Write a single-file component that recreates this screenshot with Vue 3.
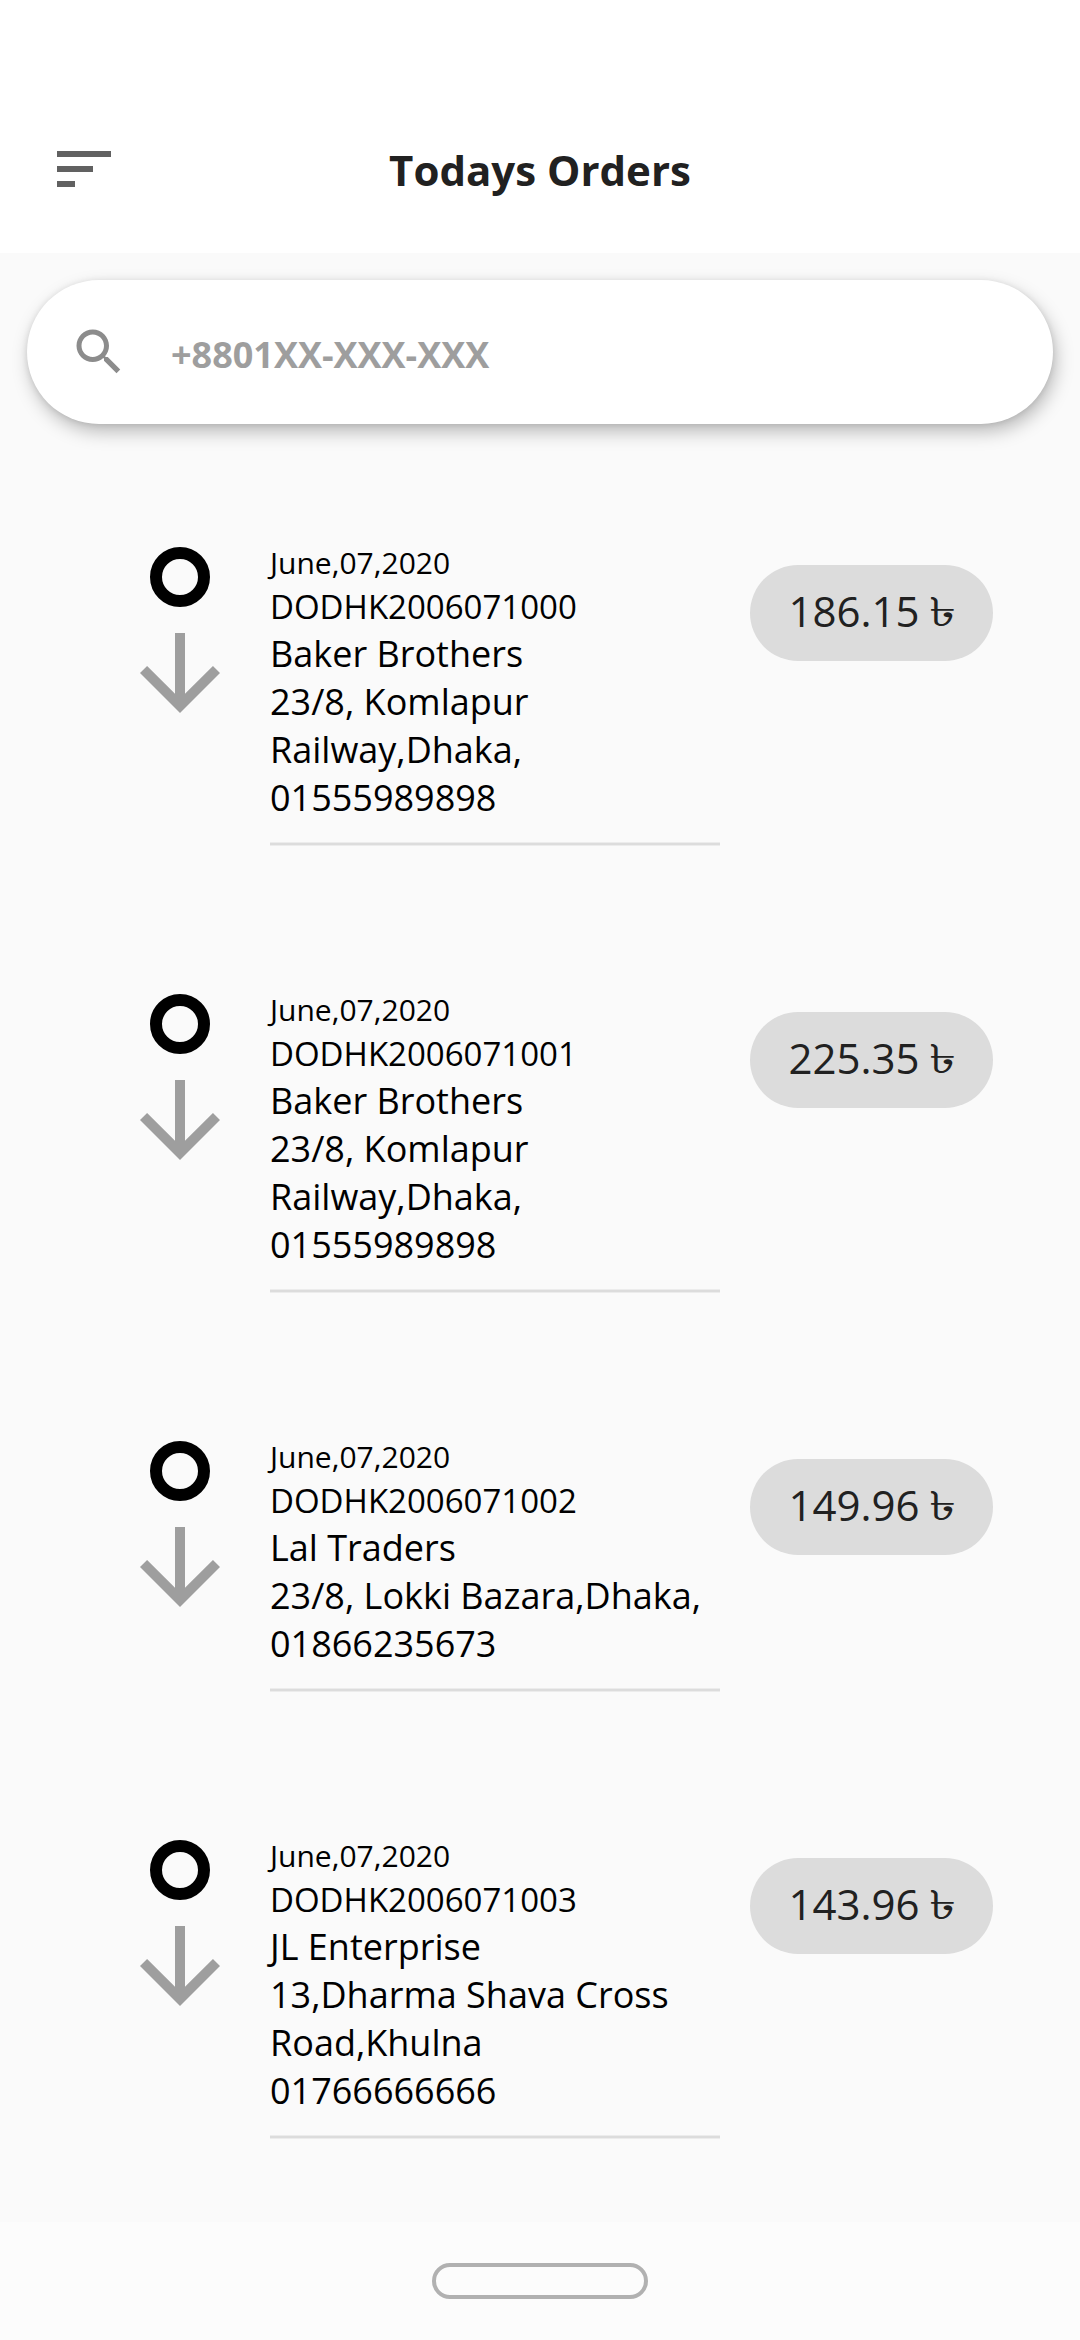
<script setup>
const orders = [
  { code: 'DODHK2006071000', name: 'Baker Brothers', address: '23/8, Komlapur Railway,Dhaka,', phone: '01555989898', price: '186.15' },
  { code: 'DODHK2006071001', name: 'Baker Brothers', address: '23/8, Komlapur Railway,Dhaka,', phone: '01555989898', price: '225.35' },
  { code: 'DODHK2006071002', name: 'Lal Traders', address: '23/8, Lokki Bazara,Dhaka,', phone: '01866235673', price: '149.96' },
  { code: 'DODHK2006071003', name: 'JL Enterprise', address: '13,Dharma Shava Cross Road,Khulna', phone: '01766666666', price: '143.96' }
]
</script>

<template>
  <div class="screen">
    <header class="bar">
      <svg class="menu" width="54" height="36" viewBox="0 0 54 36" fill="#616161">
        <path d="M0 0h54v6H0zM0 15h36v6H0zM0 30h18v6H0z" />
      </svg>
      <h1 class="title">Todays Orders</h1>
    </header>

    <main class="content">
      <label class="search">
        <svg width="60" height="60" viewBox="0 0 24 24" fill="#8c8c8c">
          <path d="M15.5 14h-.79l-.28-.27C15.41 12.59 16 11.11 16 9.5 16 5.91 13.09 3 9.5 3S3 5.91 3 9.5 5.91 16 9.5 16c1.61 0 3.09-.59 4.23-1.57l.27.28v.79l5 4.99L20.49 19l-4.99-5zm-6 0C7.01 14 5 11.99 5 9.5S7.01 5 9.5 5 14 7.01 14 9.5 11.99 14 9.5 14z" />
        </svg>
        <span class="hint">+8801XX-XXX-XXX</span>
      </label>

      <ul class="orders">
        <li v-for="o in orders" :key="o.code" class="order">
          <div class="marker">
            <span class="ring"></span>
            <svg width="120" height="120" viewBox="0 0 24 24" fill="#9e9e9e">
              <path d="M20 12l-1.41-1.41L13 16.17V4h-2v12.17l-5.58-5.59L4 12l8 8 8-8z" />
            </svg>
          </div>
          <div class="details">
            <div class="date">June,07,2020</div>
            <div class="code">{{ o.code }}</div>
            <div class="line">{{ o.name }}</div>
            <div class="line">{{ o.address }}</div>
            <div class="line">{{ o.phone }}</div>
            <div class="divider"></div>
          </div>
          <div class="price">{{ o.price }} <span class="taka">৳</span></div>
        </li>
      </ul>
    </main>

    <footer class="nav"><span class="home"></span></footer>
  </div>
</template>

<style>
body {
  margin: 0;
}
</style>

<style scoped>
.screen {
  width: 1080px;
  height: 2340px;
  display: flex;
  flex-direction: column;
  overflow: hidden;
  background: #fafafa;
  font-family: 'Open Sans', 'Noto Sans', sans-serif;
  color: #000;
}
.bar {
  box-sizing: border-box;
  height: 253px;
  flex: none;
  display: grid;
  grid-template-columns: 57px 1fr 57px;
  grid-template-rows: 1fr;
  padding-top: 84px;
  background: #fff;
}
.menu {
  grid-area: 1 / 2;
  margin-top: 67px;
}
.title {
  grid-area: 1 / 1 / 2 / 4;
  justify-self: center;
  margin: 57px 0 0;
  font-size: 42px;
  line-height: 58px;
  font-weight: 700;
  color: #212121;
}
.content {
  height: 1969px;
  flex: none;
  overflow: hidden;
}
.search {
  box-sizing: border-box;
  display: flex;
  align-items: center;
  height: 144px;
  margin: 27px 27px 0;
  padding: 0 42px;
  border-radius: 72px;
  background: #fff;
  box-shadow: 3px 8px 18px rgba(0, 0, 0, 0.25), 0 1px 6px rgba(0, 0, 0, 0.1);
}
.hint {
  margin: 5px 0 0 42px;
  font-size: 36px;
  line-height: 49px;
  font-weight: 700;
  color: #9e9e9e;
}
.orders {
  list-style: none;
  margin: 118px 0 0;
  padding: 0;
}
.order {
  display: grid;
  grid-template-columns: 120px 450px 243px;
  column-gap: 30px;
  align-items: start;
  padding: 0 87px 143px 120px;
}
.marker {
  display: flex;
  flex-direction: column;
  align-items: center;
  gap: 6px;
  padding-top: 5px;
}
.ring {
  box-sizing: border-box;
  width: 60px;
  height: 60px;
  border: 12px solid #000;
  border-radius: 50%;
}
.date {
  font-size: 30px;
  line-height: 41px;
}
.code {
  margin-top: 1px;
  font-size: 33px;
  line-height: 46px;
}
.line {
  font-size: 36px;
  line-height: 48px;
}
.divider {
  height: 2px;
  margin-top: 20px;
  background: #dcdcdc;
  border: solid #ececec;
  border-width: 1px 0;
}
.price {
  box-sizing: border-box;
  height: 96px;
  margin-top: 23px;
  border-radius: 48px;
  background: #dcdcdc;
  color: #212121;
  font-size: 42px;
  line-height: 92px;
  text-align: center;
  white-space: nowrap;
}
/* The fallback taka sign is narrower than the digits beside it. */
.taka {
  display: inline-block;
  margin: 0 1.5px;
  line-height: 1;
  transform: scale(1.3, 0.95);
}
.nav {
  flex: 1;
  display: flex;
  justify-content: center;
  align-items: center;
  background: #fcfcfc;
}
.home {
  box-sizing: border-box;
  width: 216px;
  height: 36px;
  border: 4.5px solid #b1b1b1;
  border-radius: 18px;
}
</style>
